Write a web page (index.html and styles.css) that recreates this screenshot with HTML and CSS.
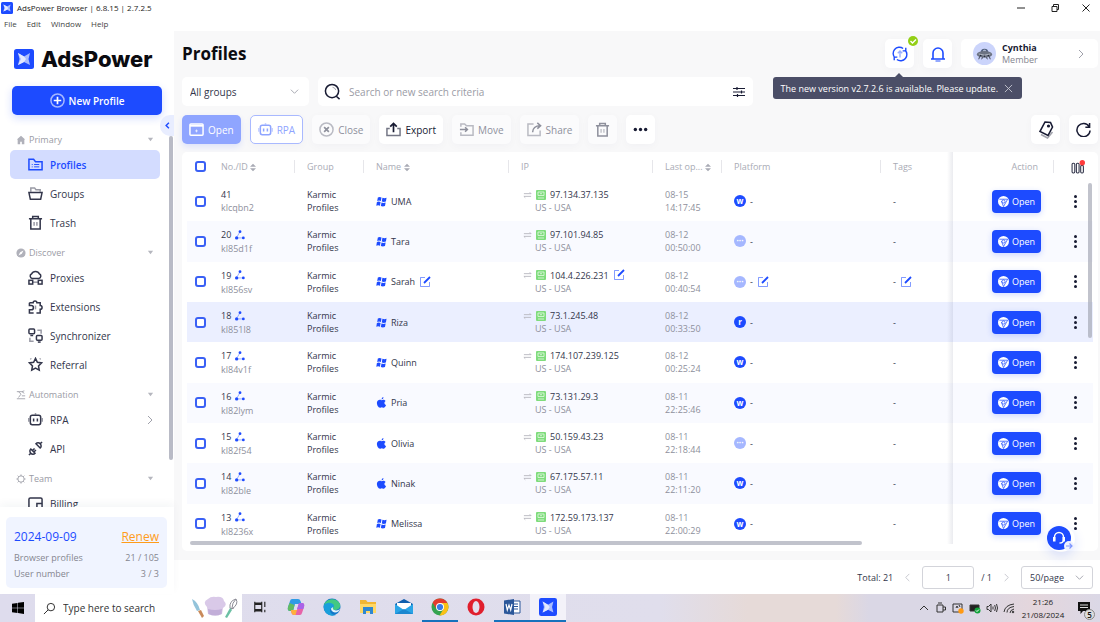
FILE: index.html
```html
<!DOCTYPE html>
<html lang="en">
<head>
    <meta charset="UTF-8">
    <meta name="viewport" content="width=device-width, initial-scale=1.0">
    <title>AdsPower Browser | 6.8.15 | 2.7.2.5</title>
    <link rel="stylesheet" href="styles.css">
</head>
<body>
    <!-- Shared icons -->
    <svg class="sprite" aria-hidden="true">
        <symbol id="i-logo" viewBox="0 0 20 20"><rect width="20" height="20" rx="2.5" fill="#1d4bff"/><path d="M4 4l6 3.5L16 4l-1.5 6 1.5 6-6-3-6 3 1.5-6z" fill="#a9bcff"/><path d="M4 4l6 3.5 2 2.5-2 3-6 3 3-6z" fill="#e3e9ff"/></symbol>
        <symbol id="i-caret" viewBox="0 0 8 8"><path d="M1 2h6L4 6z" fill="#b5b6be"/></symbol>
        <symbol id="i-right" viewBox="0 0 10 10"><path d="M3 1l4 4-4 4"/></symbol>
        <symbol id="i-left" viewBox="0 0 10 10"><path d="M7 1L3 5l4 4"/></symbol>
        <symbol id="i-plus" viewBox="0 0 16 16"><circle cx="8" cy="8" r="7" opacity=".6"/><path d="M8 4v8M4 8h8" stroke-width="1.8"/></symbol>
        <symbol id="i-home" viewBox="0 0 12 12"><path d="M6 1l5 4.5h-1V11H7V8H5v3H2V5.5H1z" fill="#b0b1ba" stroke="none"/></symbol>
        <symbol id="i-compass" viewBox="0 0 12 12"><circle cx="6" cy="6" r="5.5" fill="#b0b1ba" stroke="none"/><path d="M9 3L7 7 3 9l2-4z" fill="#fff" stroke="none"/></symbol>
        <symbol id="i-auto" viewBox="0 0 12 12"><path d="M1 2h6M7 2l3-1M7 2l3 2M3 2l3 3-3 4M1 10.5h10M7 7h4"/></symbol>
        <symbol id="i-gear" viewBox="0 0 12 12"><circle cx="6" cy="6" r="3.8"/><path d="M6 .5v2M6 9.5v2M.5 6h2M9.500 6h2M2 2l1.300 1.300M8.700 8.700L10 10M10 2L8.700 3.300M3.300 8.700L2 10"/></symbol>
        <symbol id="i-folder" viewBox="0 0 16 16"><path d="M1 13.5v-11h5L8 5h7v8.5z"/><path d="M4 8h1M6.500 8H12M4 10.500h1M6.500 10.500H12" stroke-width="1"/></symbol>
        <symbol id="i-groups" viewBox="0 0 16 16"><path d="M3 6V2h4l1.500 2H13v2" opacity=".5"/><path d="M1 7h14l-1.500 7h-11z"/></symbol>
        <symbol id="i-trash" viewBox="0 0 16 16"><path d="M1 4h14M5 4V1.500h6V4M3 4v11h10V4"/><path d="M6.500 7.500v4M9.500 7.500v4" opacity=".5"/></symbol>
        <symbol id="i-proxy" viewBox="0 0 16 16"><path d="M4.500 9A2.600 2.600 0 0 1 4 4a4.200 3.300 0 0 1 8 0 2.600 2.600 0 0 1-.5 5z"/><rect x="1" y="11" width="4" height="4"/><rect x="11" y="11" width="4" height="4"/><path d="M5 13h6" opacity=".5"/></symbol>
        <symbol id="i-puzzle" viewBox="0 0 16 16"><path d="M1.500 4h4a2 2 0 1 1 4 0H13v3a2 2 0 1 1 0 4v4H9M1.500 4v3H3.500a1.700 1.700 0 0 1 0 4.500h-2V15H6"/><path d="M8 7v4" opacity=".5"/></symbol>
        <symbol id="i-sync" viewBox="0 0 16 16"><rect x="1" y="1" width="6" height="5" rx="1"/><path d="M2.500 8h3"/><rect x="9" y="8" width="6" height="5" rx="1"/><path d="M10.500 15h3"/><path d="M10 2.500h4V6M2 10.500V14h4" opacity=".5"/></symbol>
        <symbol id="i-star" viewBox="0 0 16 16"><path d="M8 1.500l2 4.200 4.500.6-3.300 3.200.8 4.500-4-2.200L4 14l.8-4.500L1.500 6.300l4.500-.6z"/><path d="M2.500 1.500l1 1M13.500 1.500l-1 1" opacity=".5"/></symbol>
        <symbol id="i-robot" viewBox="0 0 16 16"><rect x="2.5" y="3.5" width="11" height="10" rx="2"/><path d="M6 7v3M10 7v3"/><path d="M.7 6.500v4M15.300 6.500v4M8 1v2" opacity=".5"/></symbol>
        <symbol id="i-plug" viewBox="0 0 16 16"><path d="M1 15l2-2M3 8.500L7.500 13a3 3 0 0 1-4.500 0 3 3 0 0 1 0-4.500zM5 10l2-2M6.500 11.500l2-2M15 1l-2 2M8.500 3L13 7.500a3 3 0 0 0 0-4.500 3 3 0 0 0-4.500 0z"/></symbol>
        <symbol id="i-bill" viewBox="0 0 16 16"><path d="M1 15V3.500Q1 2 2.500 2h11Q15 2 15 3.500V15"/><path d="M15 8H9.500v4"/></symbol>
        <symbol id="i-search" viewBox="0 0 18 18"><circle cx="8.500" cy="8.500" r="7"/><path d="M13 14l3.500 3"/><path d="M9 4.500a4 4 0 0 1 3.500 3" opacity=".4" stroke-width="1"/></symbol>
        <symbol id="i-sliders" viewBox="0 0 12 12"><path d="M0 2.500h12M0 6h12M0 9.500h12M4 1v3M8.500 4.500v3M4.500 8v3"/></symbol>
        <symbol id="i-window" viewBox="0 0 16 16"><rect x="1" y="2" width="14" height="12" rx="1"/><path d="M1 4h14" stroke-width="2"/><path d="M8 8v3M6.500 9.500h3" stroke-width="1" opacity=".7"/></symbol>
        <symbol id="i-close" viewBox="0 0 16 16"><circle cx="8" cy="8" r="7" opacity=".6"/><path d="M5.500 5.500l5 5M10.500 5.500l-5 5" stroke-width="1.800"/></symbol>
        <symbol id="i-export" viewBox="0 0 16 16"><path d="M4 7H1v7.500h14V7h-3" opacity=".6"/><path d="M8 11V2M4.500 5L8 1.500 11.500 5" stroke-width="1.800"/></symbol>
        <symbol id="i-move" viewBox="0 0 16 16"><path d="M2 5V2h4l2 2h7v10H2v-3" opacity=".6"/><path d="M1 8h8M6.500 5.500L9 8l-2.500 2.500" stroke-width="1.600"/></symbol>
        <symbol id="i-share" viewBox="0 0 16 16"><path d="M7 2H1v12.500h13V9" opacity=".6"/><path d="M6 11c0-4 3-7 8-7M11 1l3.500 3L11 7"/></symbol>
        <symbol id="i-more" viewBox="0 0 16 16"><g fill="#181b33" stroke="none"><circle cx="2.500" cy="8" r="1.800"/><circle cx="8" cy="8" r="1.800"/><circle cx="13.500" cy="8" r="1.800"/></g></symbol>
        <symbol id="i-tag" viewBox="0 0 18 18"><path d="M8 1l5.500.5L15.500 6l-4.500 8.500-8-4z"/><circle cx="11.500" cy="5" r=".8"/><path d="M4 13.500l6.500 3.500 5-6" opacity=".4"/></symbol>
        <symbol id="i-refresh" viewBox="0 0 16 16"><path d="M14 5a7 7 0 1 0 1 4M14.500 1v4.500H10"/></symbol>
        <symbol id="i-update" viewBox="0 0 18 18"><path d="M3.500 13.500A7 7 0 0 1 12.500 2.800M14.500 4.500A7 7 0 0 1 5.500 15.200M15.500 2v3.500H12M2.500 16v-3.500H6"/><path d="M9 13V6M6.500 8.200L9 5.700l2.500 2.500" opacity=".45"/></symbol>
        <symbol id="i-bell" viewBox="0 0 16 16"><path d="M1 13h14M3 13V7a5 5 0 0 1 10 0v6"/><path d="M5.500 15h5" opacity=".6"/></symbol>
        <symbol id="i-sort" viewBox="0 0 8 12"><path d="M0 5h8L4 1zM0 7h8l-4 4z" fill="#a9abb5"/></symbol>
        <symbol id="i-tree" viewBox="0 0 12 12"><path d="M5.500 3L2.500 8M3 9.500h6" opacity=".5"/><g fill="#1d4bff" stroke="none"><circle cx="6" cy="2" r="1.700"/><circle cx="2" cy="9.500" r="2"/><circle cx="10" cy="9.500" r="1.700"/></g></symbol>
        <symbol id="i-windows" viewBox="0 0 12 12"><path d="M2 1.500q2-1 4 0L5.300 5.500q-2-1-4 0zM7 2q2.200 1 4.500 0l-.7 4q-2.200 1-4.500 0zM1 6.500q2-1 4 0l-.7 4q-2-1-4 0zM6 7q2.200 1 4.500 0l-.7 4q-2.200 1-4.500 0z" fill="#1d4bff"/></symbol>
        <symbol id="i-apple" viewBox="0 0 12 12"><path d="M6 3.500C7 3 9 2.300 10.500 4.300 8.500 5.500 9 8 11 8.700 10 11 9 12 7.800 11.600q-1.500-.8-3 0C2.500 12 .8 8.500 1 6 1.500 3 4 2.500 6 3.500zM6 2.800Q6 .5 8.200 0 8.300 2.400 6 2.800z" fill="#1d4bff"/></symbol>
        <symbol id="i-swap" viewBox="0 0 10 8"><path d="M1 2.500h8L7.500 1M9 5.500H1L2.500 7"/></symbol>
        <symbol id="i-net" viewBox="0 0 10 10"><rect width="10" height="10" rx="1" fill="#7fdc7c"/><path d="M2 2h6v3.500H2zM4 3.700h2M2 8h6" fill="none" stroke="#e5f9e4" stroke-width=".8"/></symbol>
        <symbol id="i-edit" viewBox="0 0 12 12"><path d="M6 1.500H1.500v9h9V6" opacity=".55"/><path d="M5 7l6-6" stroke-width="1.800"/></symbol>
        <symbol id="i-browser" viewBox="0 0 12 12"><circle cx="6" cy="6" r="6" fill="#fff"/><path d="M1.500 3.500h9L6 11.500 3.700 5.500" fill="none" stroke="#1d4bff" stroke-width=".8"/><circle cx="6" cy="6" r="1.700" fill="#fff" stroke="#1d4bff" stroke-width=".8"/></symbol>
        <symbol id="i-x" viewBox="0 0 10 10"><path d="M1 1l8 8M9 1L1 9"/></symbol>
        <symbol id="i-down" viewBox="0 0 10 10"><path d="M1 3l4 4 4-4"/></symbol>
    </svg>

    <header class="titlebar">
        <svg class="titlebar-icon"><use href="#i-logo"/></svg>
        <span>AdsPower Browser | 6.8.15 | 2.7.2.5</span>
        <div class="window-buttons">
            <button aria-label="Minimize"><svg viewBox="0 0 10 10"><path d="M1 5h8"/></svg></button>
            <button aria-label="Restore"><svg viewBox="0 0 10 10"><path d="M2 3.500h5v5H2zM3.500 3V1.500h5v5H7"/></svg></button>
            <button aria-label="Close window"><svg viewBox="0 0 10 10"><path d="M1.500 1.500l7 7M8.500 1.500l-7 7"/></svg></button>
        </div>
    </header>
    <nav class="menubar">
        <button>File</button><button>Edit</button><button>Window</button><button>Help</button>
    </nav>

    <div class="app">
        <aside class="sidebar">
            <div class="logo"><svg><use href="#i-logo"/></svg><span>AdsPower</span></div>
            <button class="new-profile"><svg class="icon"><use href="#i-plus"/></svg>New Profile</button>
            <nav class="side-nav">
                <button class="section"><svg class="icon"><use href="#i-home"/></svg>Primary<svg class="caret"><use href="#i-caret"/></svg></button>
                <a href="#" class="item active"><svg class="icon"><use href="#i-folder"/></svg>Profiles</a>
                <a href="#" class="item"><svg class="icon"><use href="#i-groups"/></svg>Groups</a>
                <a href="#" class="item"><svg class="icon"><use href="#i-trash"/></svg>Trash</a>
                <button class="section"><svg class="icon"><use href="#i-compass"/></svg>Discover<svg class="caret"><use href="#i-caret"/></svg></button>
                <a href="#" class="item"><svg class="icon"><use href="#i-proxy"/></svg>Proxies</a>
                <a href="#" class="item"><svg class="icon"><use href="#i-puzzle"/></svg>Extensions</a>
                <a href="#" class="item"><svg class="icon"><use href="#i-sync"/></svg>Synchronizer</a>
                <a href="#" class="item"><svg class="icon"><use href="#i-star"/></svg>Referral</a>
                <button class="section"><svg class="icon"><use href="#i-auto"/></svg>Automation<svg class="caret"><use href="#i-caret"/></svg></button>
                <a href="#" class="item"><svg class="icon"><use href="#i-robot"/></svg>RPA<svg class="arrow"><use href="#i-right"/></svg></a>
                <a href="#" class="item"><svg class="icon"><use href="#i-plug"/></svg>API</a>
                <button class="section"><svg class="icon"><use href="#i-gear"/></svg>Team<svg class="caret"><use href="#i-caret"/></svg></button>
                <a href="#" class="item"><svg class="icon"><use href="#i-bill"/></svg>Billing</a>
            </nav>
            <div class="side-scroll"></div>
            <button class="collapse" aria-label="Collapse sidebar"><svg><use href="#i-left"/></svg></button>
            <div class="plan">
                <div class="plan-card">
                    <div class="plan-row plan-top"><span>2024-09-09</span><a href="#">Renew</a></div>
                    <div class="plan-row"><span>Browser profiles</span><span>21 / 105</span></div>
                    <div class="plan-row"><span>User number</span><span>3 / 3</span></div>
                </div>
            </div>
        </aside>

        <div class="content">
            <main class="main">
                <div class="row page-head">
                    <h1>Profiles</h1>
                    <div class="update">
                        <button class="btn square" aria-label="Update"><svg class="icon blue"><use href="#i-update"/></svg></button>
                        <svg class="update-badge" viewBox="0 0 10 10"><circle cx="5" cy="5" r="5" fill="#93cf16"/><path d="M2.500 5l2 2 3.500-3.500" fill="none" stroke="#fff" stroke-width="1.400"/></svg>
                        <div class="tooltip">The new version v2.7.2.6 is available. Please update.<button aria-label="Dismiss"><svg><use href="#i-x"/></svg></button></div>
                    </div>
                    <button class="btn square" aria-label="Notifications"><svg class="icon blue"><use href="#i-bell"/></svg></button>
                    <button class="user">
                        <svg class="avatar" viewBox="0 0 24 24"><circle cx="12" cy="12" r="12" fill="#cbd4fb"/><path d="M8 11a4 4 0 0 1 8 0z" fill="#4a5a78"/><circle cx="12" cy="9.500" r="1.800" fill="#a9b5cc"/><ellipse cx="12" cy="13" rx="8" ry="3.500" fill="#6b7282"/><path d="M6 12.500q6 2.500 12 0" fill="none" stroke="#b7bdc9"/><path d="M7 15l-1 3M17 15l1 3M10 16l-1 2M14 16l1 2" stroke="#3d4353"/><g fill="#22283a"><circle cx="8" cy="14" r=".8"/><circle cx="12" cy="14.800" r=".8"/><circle cx="16" cy="14" r=".8"/></g></svg>
                        <span class="user-text"><b>Cynthia</b><span>Member</span></span>
                        <svg class="arrow"><use href="#i-right"/></svg>
                    </button>
                </div>

                <div class="row">
                    <div class="group-select">
                        <select aria-label="Group"><option>All groups</option></select>
                        <svg class="select-arrow"><use href="#i-down"/></svg>
                    </div>
                    <label class="search">
                        <svg class="icon"><use href="#i-search"/></svg>
                        <input type="text" aria-label="Search" placeholder="Search or new search criteria">
                        <svg class="filter"><use href="#i-sliders"/></svg>
                    </label>
                </div>

                <div class="row">
                    <button class="btn open-all"><svg class="icon"><use href="#i-window"/></svg>Open</button>
                    <button class="btn outline"><svg class="icon"><use href="#i-robot"/></svg>RPA</button>
                    <button class="btn faded"><svg class="icon"><use href="#i-close"/></svg>Close</button>
                    <button class="btn"><svg class="icon"><use href="#i-export"/></svg>Export</button>
                    <button class="btn faded"><svg class="icon"><use href="#i-move"/></svg>Move</button>
                    <button class="btn faded"><svg class="icon"><use href="#i-share"/></svg>Share</button>
                    <button class="btn faded square" aria-label="Delete"><svg class="icon"><use href="#i-trash"/></svg></button>
                    <button class="btn square" aria-label="More"><svg class="icon"><use href="#i-more"/></svg></button>
                    <button class="btn square push" aria-label="Tags"><svg class="icon big"><use href="#i-tag"/></svg></button>
                    <button class="btn square" aria-label="Refresh"><svg class="icon"><use href="#i-refresh"/></svg></button>
                </div>

                <div class="card">
                    <table>
                        <colgroup>
                            <col class="c-check"><col class="c-id"><col class="c-group"><col class="c-name"><col class="c-ip">
                            <col class="c-last"><col><col class="c-tags"><col class="c-action"><col class="c-more">
                        </colgroup>
                        <thead>
                            <tr>
                                <th class="check"><input type="checkbox" aria-label="Select all"></th>
                                <th class="line">No./ID <svg><use href="#i-sort"/></svg></th>
                                <th class="line">Group</th>
                                <th class="line">Name <svg><use href="#i-sort"/></svg></th>
                                <th class="line">IP</th>
                                <th class="line">Last op... <svg><use href="#i-sort"/></svg></th>
                                <th class="line">Platform</th>
                                <th>Tags</th>
                                <th class="line action">Action</th>
                                <th class="more"><svg class="columns" viewBox="0 0 13 13"><g fill="none" stroke="#33364b"><rect x="1" y="3" width="2.500" height="9" rx="1"/><rect x="5" y="3" width="2.500" height="9" rx="1"/><rect x="9" y="5" width="2.500" height="7" rx="1"/></g><circle cx="10.500" cy="2.500" r="2.500" fill="#ff3b3b"/></svg></th>
                            </tr>
                        </thead>
                        <tbody id="profileRows"></tbody>
                    </table>
                    <div class="scroll-x"></div>
                    <div class="scroll-y"></div>
                    <button class="support" aria-label="Support">
                        <svg viewBox="0 0 28 26"><circle cx="12" cy="12" r="12" fill="#1d4bff"/><path d="M7.500 14v-3a4.500 4.500 0 0 1 9 0v3q0 3-4 3" fill="none" stroke="#fff" stroke-width="1.400"/><path d="M6 11h2.500v4.500H6zM15.500 11H18v4.500h-2.500z" fill="#fff"/><circle cx="22" cy="20" r="5" fill="#eef1ff"/><path d="M19 20h5.500M22.500 17.500L25 20l-2.500 2.500" fill="none" stroke="#7d95ff" stroke-width="1.200"/></svg>
                    </button>
                </div>
            </main>
            <footer class="pager">
                <span>Total: 21</span>
                <button aria-label="Previous page"><svg><use href="#i-left"/></svg></button>
                <input type="text" value="1" aria-label="Page">
                <span>/ 1</span>
                <button aria-label="Next page"><svg><use href="#i-right"/></svg></button>
                <div class="page-size">
                    <select aria-label="Page size"><option>50/page</option></select>
                    <svg class="select-arrow"><use href="#i-down"/></svg>
                </div>
            </footer>
        </div>
    </div>

    <footer class="taskbar">
        <button class="start" aria-label="Start"><svg viewBox="0 0 12 12"><path d="M0 1.700l5.500-.8v4.800H0zM6 .8L12 0v5.700H6zM0 6.200h5.500V11L0 10.200zM6 6.200h6V12l-6-.9z"/></svg></button>
        <label class="task-search">
            <svg class="lens" viewBox="0 0 14 14"><circle cx="8.500" cy="5.500" r="4"/><path d="M5.500 8.500L1 13"/></svg>
            <input type="text" aria-label="Windows search" placeholder="Type here to search">
            <svg class="chef" viewBox="0 0 48 24">
                <path d="M1 3q6 3 8 11l-3 1Q2 9 1 3z" fill="#93c3da"/><path d="M7 15l3-1 3 6-2 2z" fill="#c98a5a"/>
                <path d="M16 11q-5-5 1-8 3-3 8-2 7-1 8 4 4 4-1 7l-1 6q-7 3-14 0z" fill="#d9c9e8"/><path d="M17 13q7 2 14 0l-.5 5q-6 3-13 0z" fill="#c2aed8"/>
                <path d="M39 12q-1-7 6-9 3 5-4 10zM41 12q0-5 4-9M39 13l4-1" fill="none" stroke="#8c8c96"/><path d="M39 12l2 2-5 8-2-1z" fill="#6cc0a4"/>
            </svg>
        </label>
        <button class="task" aria-label="Task view"><svg class="small" viewBox="0 0 16 16" fill="none" stroke="#222" stroke-width="1.300"><path d="M2 5h8v6H2zM2 2v1.500h8V2M2 14v-1.500h8V14M13.500 2v6M13.500 11v3"/></svg></button>
        <button class="task" aria-label="Copilot"><svg viewBox="0 0 18 18"><path d="M5 1h6q2 0 2.500 2l1 3H8L6 13H3Q0 13 1 9l2-6q.5-2 2-2z" fill="#2f9be6"/><path d="M2.500 5l-1.500 4Q0 13 3 13h3l1.500-6z" fill="#62bb62"/><path d="M13 17H7q-2 0-2.500-2L4 12h6l2-7h3q3 0 2 4l-2 6q-.5 2-2 2z" fill="#e763a8"/><path d="M4 12h6l-1.500 5H7q-2 0-2.500-2z" fill="#ffb13b"/><path d="M12 5h3q3 0 2 4l-.7 2H10z" fill="#a964e8"/></svg></button>
        <button class="task" aria-label="Edge"><svg viewBox="0 0 18 18"><circle cx="9" cy="9" r="8.500" fill="#1277c9"/><path d="M1 7C3 0 14-1 17 6c1 4-2 6-5 6-2 0-3-1-2-3 0-3-5-4-9-2z" fill="#43c982"/><path d="M1 7q4-4 9-1 2 2 0 4-3 0-3 3 1 4 6 4Q7 19 3 15 0 11 1 7z" fill="#1a9fdb"/><path d="M10 9q-1 3 3 3.500 3 0 4-2-1 4-5 4-4-1-4-4z" fill="#e0f2fa"/></svg></button>
        <button class="task" aria-label="File Explorer"><svg viewBox="0 0 18 18"><path d="M1 2h6l1.500 2H17v11H1z" fill="#f2b632"/><path d="M1 6h16v9H1z" fill="#ffd867"/><path d="M4 9h10v7h-3v-3H7v3H4z" fill="#2f87d1"/></svg></button>
        <button class="task" aria-label="Mail"><svg viewBox="0 0 18 18"><path d="M0 6l9-5 9 5v10H0z" fill="#0f5fae"/><path d="M2 5h14v8H2z" fill="#fff"/><path d="M0 6l9 6 9-6v10H0z" fill="#29a4e6"/><path d="M0 16l9-5 9 5z" fill="#1b87d0"/></svg></button>
        <button class="task running" aria-label="Chrome"><svg viewBox="0 0 18 18"><circle cx="9" cy="9" r="8.500" fill="#34a350"/><path d="M1.600 4.700A8.500 8.500 0 0 1 16.400 5H9L5.500 11z" fill="#e33b2e"/><path d="M16.400 5A8.500 8.500 0 0 1 8.500 17.500L12.500 11 9 5z" fill="#fbc116"/><circle cx="9" cy="9" r="4" fill="#fff"/><circle cx="9" cy="9" r="3.100" fill="#3a7be8"/></svg></button>
        <button class="task" aria-label="Opera"><svg viewBox="0 0 18 18"><circle cx="9" cy="9" r="8.500" fill="#e01f2d"/><ellipse cx="9" cy="9" rx="3.500" ry="6" fill="#e3e0ee"/></svg></button>
        <button class="task running" aria-label="Word"><svg viewBox="0 0 18 18"><path d="M9 3h8v12H9z" fill="#fff" stroke="#2b579a"/><path d="M10 6h5M10 8.500h5M10 11h5" stroke="#2b579a"/><path d="M1 2.500L11 1v16L1 15.500z" fill="#2b579a"/><path d="M3 6l1.300 6L6 7l1.700 5L9 6" fill="none" stroke="#fff" stroke-width="1.200"/></svg></button>
        <button class="task running current" aria-label="AdsPower"><svg><use href="#i-logo"/></svg></button>
        <div class="tray">
            <svg viewBox="0 0 12 12"><path d="M2 8l4-4 4 4"/></svg>
            <svg viewBox="0 0 12 12"><path d="M2 3h6v7H2zM8 5h2.500v3H8M3 1h4"/></svg>
            <svg viewBox="0 0 12 12"><path d="M1 2h9v8H1zM4 6l1-2 1 2M7 3l1 2"/><circle cx="9" cy="9" r="2.700" fill="#ff9a14" stroke="none"/></svg>
            <svg viewBox="0 0 12 12"><path d="M1 3h9v6H1z" fill="#222"/><circle cx="8.500" cy="8.500" r="3" fill="#12a33b" stroke="none"/><path d="M7 8.500l1 1L10 7.500" stroke="#fff"/></svg>
            <svg viewBox="0 0 12 12"><path d="M1 4.500h1.500L5 2v8L2.500 7.500H1zM7 4.500v3M8.700 3q1.500 3 0 6M10.500 2q2 4 0 8"/></svg>
            <svg viewBox="0 0 12 12"><path d="M1 10Q2 3 11 2M4 10.500q0-5 7-6M7 11q0-3 4-4"/><circle cx="10" cy="10" r=".8" fill="#333"/></svg>
        </div>
        <div class="clock"><span>21:26</span><span>21/08/2024</span></div>
        <button class="notice" aria-label="Notifications, 5 new"><svg viewBox="0 0 14 14"><path d="M1 1h12v9H6l-2.500 3v-3H1z" fill="#111"/><path d="M3 4h8M3 6.500h8" stroke="#ddd"/></svg><span>5</span></button>
    </footer>

    <script>
        const profiles = [
            { no: 41, id: "klcqbn2", name: "UMA", os: "windows", ip: "97.134.37.135", date: "08-15", time: "14:17:45", platform: "w" },
            { no: 20, id: "kl85d1f", name: "Tara", os: "windows", ip: "97.101.94.85", date: "08-12", time: "00:50:00", platform: "" },
            { no: 19, id: "kl856sv", name: "Sarah", os: "windows", ip: "104.4.226.231", date: "08-12", time: "00:40:54", platform: "", edit: true },
            { no: 18, id: "kl851l8", name: "Riza", os: "windows", ip: "73.1.245.48", date: "08-12", time: "00:33:50", platform: "r", hover: true },
            { no: 17, id: "kl84v1f", name: "Quinn", os: "windows", ip: "174.107.239.125", date: "08-12", time: "00:25:24", platform: "w" },
            { no: 16, id: "kl82lym", name: "Pria", os: "apple", ip: "73.131.29.3", date: "08-11", time: "22:25:46", platform: "w" },
            { no: 15, id: "kl82f54", name: "Olivia", os: "apple", ip: "50.159.43.23", date: "08-11", time: "22:18:44", platform: "" },
            { no: 14, id: "kl82ble", name: "Ninak", os: "apple", ip: "67.175.57.11", date: "08-11", time: "22:11:20", platform: "w" },
            { no: 13, id: "kl8236x", name: "Melissa", os: "windows", ip: "172.59.173.137", date: "08-11", time: "22:00:29", platform: "w" }
        ];

        const icon = (name, cls) => `<svg class="${cls}"><use href="#i-${name}"/></svg>`;

        document.getElementById("profileRows").innerHTML = profiles.map(p => {
            const edit = p.edit ? icon("edit", "edit") : "";
            const tree = p.no < 41 ? icon("tree", "tree") : "";
            return `
                <tr class="${p.hover ? "hover" : ""}">
                    <td class="check"><input type="checkbox" aria-label="Select ${p.name}"></td>
                    <td><div class="${tree ? "tall" : ""}">${p.no}${tree}</div><div class="muted">${p.id}</div></td>
                    <td>Karmic<br>Profiles</td>
                    <td><div class="cell">${icon(p.os, "os")}${p.name}${edit}</div></td>
                    <td><div class="cell ip">${icon("swap", "swap")}${icon("net", "net")}${p.ip}${edit}</div><div class="muted country">US - USA</div></td>
                    <td class="muted">${p.date}<br>${p.time}</td>
                    <td><div class="cell"><span class="platform ${p.platform ? "" : "none"}">${p.platform || "···"}</span>-${edit}</div></td>
                    <td><div class="cell">-${edit}</div></td>
                    <td class="action"><button class="open">${icon("browser", "chrome")}Open</button></td>
                    <td class="more"><button class="dots" aria-label="More for ${p.name}"><i></i><i></i><i></i></button></td>
                </tr>`;
        }).join("");
    </script>
</body>
</html>
```

FILE: styles.css
```css
* {
    box-sizing: border-box;
}

body {
    margin: 0;
    height: 100vh;
    display: flex;
    flex-direction: column;
    overflow: hidden;
    background: #fff;
    color: #33364b;
    font-family: "Open Sans", "Noto Sans", sans-serif;
    font-size: 10px;
}

button, input, select {
    font: inherit;
    color: inherit;
    border: none;
    background: none;
    padding: 0;
    margin: 0;
    outline: none;
}

a {
    color: inherit;
    text-decoration: none;
}

svg {
    flex: none;
    display: block;
}

.sprite {
    position: absolute;
    width: 0;
    height: 0;
}

.icon {
    width: 15px;
    height: 15px;
    fill: none;
    stroke: currentColor;
    stroke-width: 1.6;
}

.icon.big {
    width: 18px;
    height: 18px;
}

/* Window frame */
.titlebar {
    height: 16px;
    display: flex;
    align-items: center;
    gap: 4px;
    padding-left: 1px;
    font-size: 8px;
    line-height: 16px;
    color: #222;
}

.titlebar-icon {
    width: 12px;
    height: 12px;
}

.window-buttons {
    margin-left: auto;
    display: flex;
}

.window-buttons button {
    width: 34px;
    height: 16px;
    display: flex;
    align-items: center;
    justify-content: center;
}

.window-buttons button:last-child {
    width: 28px;
}

.window-buttons svg {
    width: 10px;
    height: 10px;
    fill: none;
    stroke: #222;
}

.menubar {
    height: 15px;
    display: flex;
    gap: 10px;
    padding-left: 4px;
    font-size: 8px;
    line-height: 15px;
    color: #444;
}

.app {
    flex: 1;
    min-height: 0;
    display: flex;
}

/* Sidebar */
.sidebar {
    position: relative;
    width: 174px;
    flex: none;
    display: flex;
    flex-direction: column;
}

.logo {
    display: flex;
    align-items: center;
    gap: 7px;
    height: 55px;
    padding-left: 14px;
    font-family: Inter, sans-serif;
    font-size: 22px;
    font-weight: 800;
    color: #0b0b10;
}

.logo svg {
    width: 20px;
    height: 20px;
}

.new-profile {
    display: flex;
    align-items: center;
    justify-content: center;
    gap: 4px;
    flex: none;
    height: 29px;
    margin: 0 12px 14px;
    border-radius: 5px;
    background: #1d4bff;
    color: #fff;
    font-weight: 600;
    box-shadow: 0 3px 8px rgba(29, 75, 255, 0.2);
}

.side-nav {
    flex: 1;
    min-height: 0;
    overflow: hidden;
    padding: 0 14px 0 10px;
}

.section {
    display: flex;
    align-items: center;
    gap: 3px;
    width: 100%;
    height: 21px;
    margin-top: 5px;
    padding: 0 6px;
    font-size: 9px;
    color: #9a9ba5;
}

.section:first-child {
    margin-top: 0;
}

.section .icon {
    width: 10px;
    height: 10px;
    stroke-width: 1;
}

.caret {
    width: 7px;
    height: 7px;
    margin-left: auto;
}

.item {
    display: flex;
    align-items: center;
    gap: 7px;
    height: 29px;
    padding: 0 5px 0 18px;
    border-radius: 5px;
}

.item.active {
    background: #d3dcff;
    color: #1d4bff;
    font-weight: 600;
}

.arrow {
    width: 10px;
    height: 10px;
    margin-left: auto;
    fill: none;
    stroke: #a0a1ab;
}

.side-scroll {
    position: absolute;
    right: 1px;
    top: 105px;
    width: 4px;
    height: 324px;
    border-radius: 2px;
    background: #b9bbc6;
}

.collapse {
    position: absolute;
    right: 0;
    top: 84px;
    width: 14px;
    height: 21px;
    border-radius: 10px 0 0 10px;
    background: #e8edff;
}

.collapse svg {
    width: 7px;
    height: 7px;
    margin: auto;
    fill: none;
    stroke: #1d4bff;
    stroke-width: 2;
}

.plan {
    padding: 10px 7px 6px 6px;
    box-shadow: 0 -4px 8px rgba(30, 40, 80, 0.04);
}

.plan-card {
    padding: 7px 8px 6px;
    border-radius: 5px;
    background: #f0f4ff;
}

.plan-row {
    display: flex;
    justify-content: space-between;
    font-size: 9px;
    line-height: 16px;
    color: #85868f;
}

.plan-top {
    font-size: 12px;
    line-height: 26px;
    color: #1d4bff;
}

.plan-top a {
    color: #ff9c1a;
    text-decoration: underline;
}

/* Main area */
.content {
    flex: 1;
    min-width: 0;
    display: flex;
    flex-direction: column;
}

.main {
    flex: 1;
    min-height: 0;
    display: flex;
    flex-direction: column;
    gap: 9px;
    padding: 8px 2px 9px 8px;
    background: #f8f8f9;
}

.row {
    display: flex;
    gap: 9px;
    height: 29px;
    flex: none;
}

h1 {
    margin: 0 auto 0 0;
    font-size: 17px;
    line-height: 30px;
    font-weight: 700;
    color: #0b0b10;
}

.btn {
    display: flex;
    align-items: center;
    justify-content: center;
    gap: 4px;
    height: 29px;
    padding: 0 7px;
    border-radius: 5px;
    background: #fff;
    color: #181b33;
    box-shadow: 0 2px 8px rgba(30, 40, 80, 0.03);
}

.btn.square {
    width: 29px;
    padding: 0;
}

.btn.open-all {
    background: #8fa5ff;
    color: #fff;
    box-shadow: 0 3px 6px rgba(29, 75, 255, 0.12);
}

.btn.outline {
    border: 1px solid #a9b9ff;
    color: #8fa5ff;
}

.btn.faded {
    background: #fbfbfc;
    color: #8e909c;
}

.btn.push {
    margin-left: auto;
}

.icon.blue {
    width: 16px;
    height: 16px;
    color: #1d4bff;
}

.update {
    position: relative;
}

.update-badge {
    position: absolute;
    right: -4px;
    top: -3px;
    width: 10px;
    height: 10px;
}

.tooltip {
    position: absolute;
    right: -108px;
    top: 38px;
    z-index: 2;
    display: flex;
    align-items: center;
    gap: 6px;
    height: 22px;
    padding: 0 9px 0 8px;
    border-radius: 3px;
    background: #4b4e67;
    color: #fff;
    font-size: 9px;
    white-space: nowrap;
}

.tooltip::before {
    content: "";
    position: absolute;
    right: 118px;
    top: -4px;
    border: 5px solid transparent;
    border-top: none;
    border-bottom-color: #4b4e67;
}

.tooltip svg {
    width: 9px;
    height: 9px;
    fill: none;
    stroke: #c6c7d2;
}

.user {
    display: flex;
    align-items: center;
    gap: 6px;
    width: 137px;
    padding: 0 12px;
    border-radius: 5px;
    background: #fff;
    text-align: left;
    font-size: 9px;
    line-height: 12px;
    color: #181b33;
}

.avatar {
    width: 23px;
    height: 23px;
}

.user-text {
    display: flex;
    flex-direction: column;
}

.user-text span {
    color: #85868f;
}

.group-select {
    position: relative;
    width: 127px;
    border-radius: 5px;
    background: #fff;
}

select {
    appearance: none;
    width: 100%;
    height: 100%;
    padding: 0 8px;
}

.select-arrow {
    position: absolute;
    right: 10px;
    top: 10px;
    width: 9px;
    height: 9px;
    fill: none;
    stroke: #a0a1ab;
    pointer-events: none;
}

.search {
    display: flex;
    align-items: center;
    gap: 8px;
    width: 435px;
    padding: 0 8px 0 6px;
    border-radius: 5px;
    background: #fff;
    color: #181b33;
}

.search .icon {
    width: 17px;
    height: 17px;
}

.search input {
    flex: 1;
}

.search input::placeholder {
    color: #9a9ba5;
}

.filter {
    width: 12px;
    height: 12px;
    stroke: #181b33;
    stroke-width: 1.2;
}

/* Profiles table */
.card {
    position: relative;
    flex: 1;
    min-height: 0;
    margin-top: -1px;
    padding: 0 5px 7px;
    border-radius: 5px;
    background: #fff;
}

table {
    width: 100%;
    height: 100%;
    table-layout: fixed;
    border-collapse: separate;
    border-spacing: 0;
    font-size: 9px;
    line-height: 13px;
}

.c-check { width: 22px; }
.c-id { width: 86px; }
.c-group { width: 69px; }
.c-name { width: 145px; }
.c-ip { width: 144px; }
.c-last { width: 69px; }
.c-tags { width: 72px; }
.c-action { width: 101px; }
.c-more { width: 39px; }

th {
    position: relative;
    height: 29px;
    padding: 0 0 0 12px;
    text-align: left;
    font-weight: 400;
    color: #a9abb5;
    white-space: nowrap;
}

th svg {
    display: inline-block;
    vertical-align: middle;
    width: 6px;
    height: 9px;
}

th.line::after {
    content: "";
    position: absolute;
    right: 0;
    top: 8px;
    width: 1px;
    height: 13px;
    background: #e6e6ea;
}

td {
    height: 40px;
    padding: 0 0 0 12px;
    white-space: nowrap;
}

tbody tr:nth-child(even) td {
    background: #f9faff;
}

tbody tr.hover td {
    background: #ebefff;
}

.check {
    padding: 0 0 0 8px;
}

input[type="checkbox"] {
    appearance: none;
    display: block;
    width: 11px;
    height: 11px;
    border: 2px solid #3a60f5;
    border-radius: 3px;
    background: #fff;
}

.muted {
    color: #8e909c;
}

.tall {
    display: flex;
    align-items: center;
    gap: 4px;
    line-height: 15px;
}

.tree {
    width: 10px;
    height: 10px;
    stroke: #1d4bff;
}

.cell {
    display: flex;
    align-items: center;
    gap: 4px;
}

.os {
    width: 11px;
    height: 11px;
}

.swap {
    width: 9px;
    height: 8px;
    margin-left: 2px;
    fill: none;
    stroke: #b5b6be;
}

.net {
    width: 10px;
    height: 10px;
}

.edit {
    width: 12px;
    height: 12px;
    fill: none;
    stroke: #1d4bff;
}

.ip {
    height: 13px;
}

.country {
    padding-left: 14px;
}

.platform {
    width: 12px;
    height: 12px;
    border-radius: 50%;
    background: #1d4bff;
    color: #fff;
    font-size: 8px;
    font-weight: 700;
    line-height: 11px;
    text-align: center;
}

.platform.none {
    background: #a5b7ff;
}

.action {
    position: relative;
    padding: 0 13px 0 0;
    text-align: right;
}

th.action {
    padding-right: 16px;
}

/* Shadow cast by the fixed column */
.action::before {
    content: "";
    position: absolute;
    left: -6px;
    top: 0;
    bottom: 0;
    width: 6px;
    background: linear-gradient(to right, transparent, rgba(30, 40, 80, 0.09));
}

.open {
    display: inline-flex;
    align-items: center;
    justify-content: center;
    gap: 3px;
    width: 49px;
    height: 23px;
    border-radius: 4px;
    background: #1d4bff;
    color: #fff;
    vertical-align: middle;
    box-shadow: 0 2px 6px rgba(29, 75, 255, 0.2);
}

.chrome {
    width: 11px;
    height: 11px;
}

.more {
    padding: 0 0 0 17px;
}

th .columns {
    width: 14px;
    height: 14px;
}

.dots {
    display: flex;
    flex-direction: column;
    gap: 2px;
    padding-left: 3px;
}

.dots i {
    width: 3px;
    height: 3px;
    border-radius: 50%;
    background: #181b33;
}

.scroll-x, .scroll-y {
    position: absolute;
    border-radius: 2px;
    background: rgba(160, 163, 176, 0.65);
}

.scroll-x {
    left: 8px;
    right: 236px;
    bottom: 6px;
    height: 4px;
}

.scroll-y {
    right: 6px;
    top: 31px;
    width: 4px;
    height: 155px;
}

.support {
    position: absolute;
    right: 23px;
    bottom: -1px;
    border-radius: 50%;
    box-shadow: 0 4px 12px rgba(29, 75, 255, 0.15);
}

.support svg {
    width: 28px;
    height: 26px;
}

/* Pagination */
.pager {
    height: 34px;
    flex: none;
    display: flex;
    align-items: center;
    justify-content: flex-end;
    gap: 7px;
    padding-right: 7px;
    font-size: 9px;
}

.pager button svg {
    width: 9px;
    height: 9px;
    margin: 0 3px;
    fill: none;
    stroke: #c3c4cc;
}

.pager input {
    width: 52px;
    height: 23px;
    border: 1px solid #d3d4da;
    border-radius: 3px;
    text-align: center;
}

.page-size {
    position: relative;
    width: 72px;
    height: 23px;
    border: 1px solid #d3d4da;
    border-radius: 3px;
}

.page-size .select-arrow {
    right: 8px;
    top: 6px;
}

/* Taskbar */
.taskbar {
    height: 28px;
    flex: none;
    display: flex;
    background: linear-gradient(to right, #dedced 0%, #e0deec 60%, #e6dad8 68%, #e6dad8 76%, #dad7e5 79%, #dad7e5 88%, #e4d6dc 94%, #dbd8e6 100%);
}

.start {
    display: flex;
    align-items: center;
    justify-content: center;
    width: 35px;
}

.start svg {
    width: 12px;
    height: 12px;
}

.task-search {
    display: flex;
    align-items: center;
    gap: 7px;
    width: 207px;
    padding: 0 3px 0 8px;
    background: #fff;
    color: #222;
}

.task-search input {
    flex: 1;
    min-width: 0;
}

.task-search input::placeholder {
    color: #333;
}

.lens {
    width: 13px;
    height: 13px;
    fill: none;
    stroke: #222;
}

.chef {
    width: 48px;
    height: 24px;
}

.task {
    display: flex;
    align-items: center;
    justify-content: center;
    width: 36px;
    border-bottom: 2px solid transparent;
}

.task svg {
    width: 18px;
    height: 18px;
}

.task svg.small {
    width: 14px;
    height: 14px;
}

.running {
    border-bottom-color: #1672bd;
}

.current {
    background: #f3f2f9;
}

.tray {
    display: flex;
    align-items: center;
    gap: 5px;
    margin-left: auto;
}

.tray svg {
    width: 12px;
    height: 12px;
    fill: none;
    stroke: #333;
}

.clock {
    display: flex;
    flex-direction: column;
    justify-content: center;
    align-items: center;
    width: 56px;
    font-size: 8px;
    line-height: 13px;
    color: #222;
}

.notice {
    position: relative;
    width: 29px;
    padding-left: 6px;
}

.notice svg {
    width: 14px;
    height: 14px;
}

.notice span {
    position: absolute;
    right: 5px;
    bottom: 2px;
    width: 11px;
    height: 11px;
    border: 1px solid #888;
    border-radius: 50%;
    background: #ddd;
    font-size: 8px;
    font-weight: 600;
    line-height: 9px;
    color: #111;
}
```
